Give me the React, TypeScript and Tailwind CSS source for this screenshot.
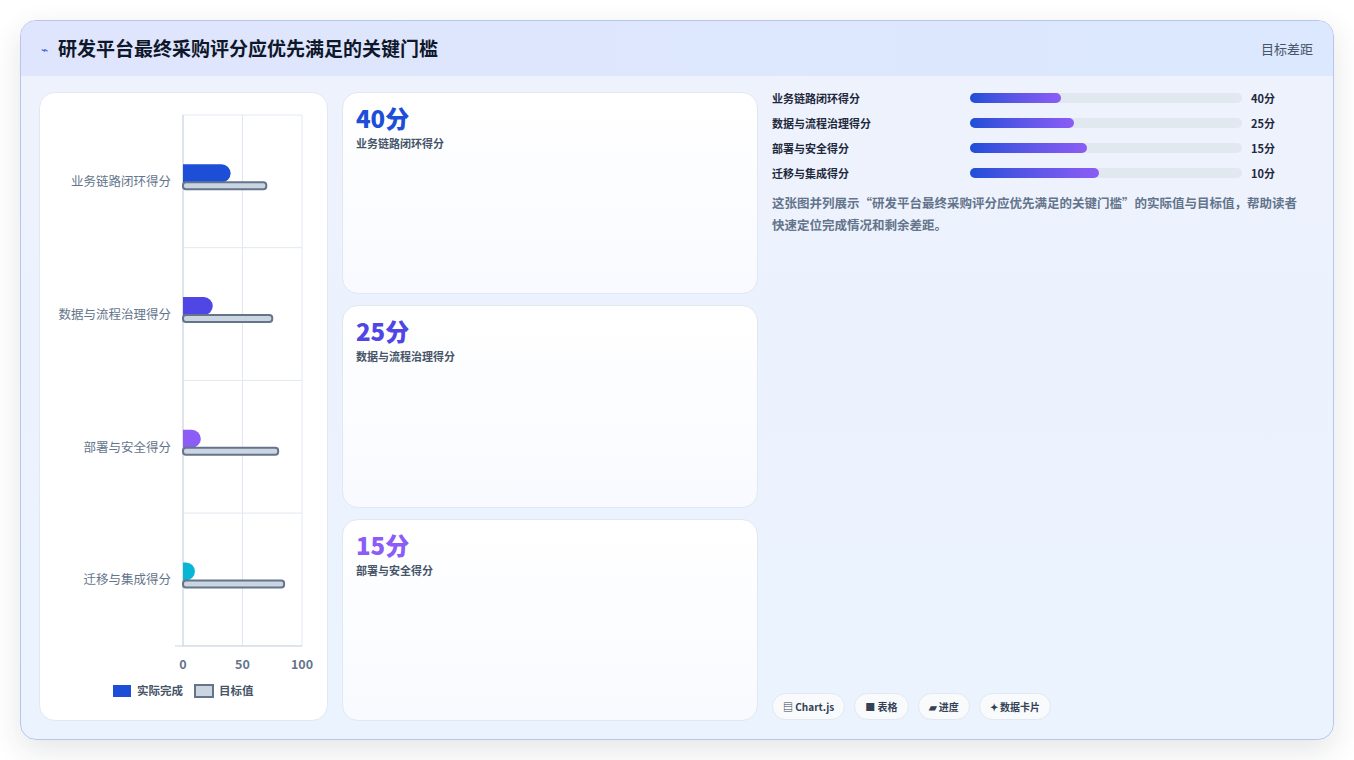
import React from "react";

const font = { fontFamily: '"Noto Sans CJK SC", "Noto Sans", sans-serif' };

const rows = [
  { label: "业务链路闭环得分", v: 40, t: 70, c: "#1d4ed8", pw: 33.5 },
  { label: "数据与流程治理得分", v: 25, t: 75, c: "#4f46e5", pw: 38.3 },
  { label: "部署与安全得分", v: 15, t: 80, c: "#8b5cf6", pw: 43 },
  { label: "迁移与集成得分", v: 10, t: 85, c: "#06b6d4", pw: 47.6 },
];

function Chart() {
  const x0 = 143, sc = 1.19, top = 22, rowH = 132.7;
  return (
    <svg width="288" height="627" className="block">
      {[0, 50, 100].map((v) => (
        <line key={v} x1={x0 + v * sc} x2={x0 + v * sc} y1={top} y2={553} stroke="#e2e8f0" />
      ))}
      {[0, 1, 2, 3, 4].map((i) => (
        <line key={i} x1={x0} x2={x0 + 119} y1={top + i * rowH} y2={top + i * rowH} stroke="#e2e8f0" />
      ))}
      <line x1={x0} x2={x0} y1={top} y2={553} stroke="#cbd5e1" />
      <line x1={x0 - 8} x2={x0 + 119} y1={553} y2={553} stroke="#cbd5e1" />
      {rows.map((r, i) => {
        const cy = top + i * rowH + rowH / 2;
        return (
          <g key={i}>
            <text x={x0 - 12} y={cy + 5} textAnchor="end" fontSize="12.5" fill="#64748b" style={font}>{r.label}</text>
            <path d={`M${x0} ${cy - 17} h${r.v * sc - 9} a9 9 0 0 1 9 9 v0 a9 9 0 0 1 -9 9 h${-(r.v * sc - 9)} z`} fill={r.c} />
            <rect x={x0} y={cy + 1} width={r.t * sc} height={7} rx={3} fill="#cbd5e1" stroke="#64748b" strokeWidth="2" />
          </g>
        );
      })}
      {[0, 50, 100].map((v) => (
        <text key={v} x={x0 + v * sc} y={576} textAnchor="middle" fontSize="12.5" fontWeight="bold" fill="#64748b" style={font}>{v}</text>
      ))}
      <rect x={73} y={592} width={18} height={12} fill="#1d4ed8" />
      <text x={97} y={602} fontSize="11.5" fontWeight="bold" fill="#475569" style={font}>实际完成</text>
      <rect x={155} y={592} width={18} height={12} fill="#cbd5e1" stroke="#64748b" strokeWidth="2" />
      <text x={179} y={602} fontSize="11.5" fontWeight="bold" fill="#475569" style={font}>目标值</text>
    </svg>
  );
}

export default function App() {
  return (
    <div className="w-[1354px] h-[760px] bg-white p-5" style={font}>
      <div className="h-[720px] rounded-2xl border border-[#b9c6ec] overflow-hidden flex flex-col shadow-[0_10px_30px_rgba(30,41,59,0.12)] bg-gradient-to-b from-[#eef2fd] to-[#eaf3fe]">
        <div className="h-[55px] shrink-0 bg-gradient-to-r from-[#dfe5fc] to-[#dbe8fd] flex items-center justify-between pl-5 pr-5">
          <div className="flex items-center gap-[10px]">
            <span className="text-[#3b5bdb] text-xs">⌁</span>
            <span className="text-[19px] font-bold text-[#0f172a]">研发平台最终采购评分应优先满足的关键门槛</span>
          </div>
          <span className="text-[13px] text-[#475569]">目标差距</span>
        </div>
        <div className="flex-1 flex gap-[14px] pl-[18px] pr-5 pt-[16px] pb-[18px]">
          <div className="w-[289px] bg-white rounded-2xl border border-[#e2e8f0]">
            <Chart />
          </div>
          <div className="w-[416px] flex flex-col gap-[11px]">
            {rows.slice(0, 3).map((r) => (
              <div key={r.label} className="flex-1 rounded-2xl border border-[#e2e8f0] bg-gradient-to-b from-white to-[#f8faff] px-[13px] pt-[9px]">
                <div className="text-[24px] font-extrabold leading-[32px]" style={{ color: r.c }}>{r.v}分</div>
                <div className="text-[11px] font-bold text-[#475569] mt-[1px]">{r.label}</div>
              </div>
            ))}
          </div>
          <div className="flex-1 flex flex-col">
            <div className="flex flex-col gap-[7px] -mt-[3px]">
              {rows.map((r) => (
                <div key={r.label} className="flex items-center h-[18px]">
                  <span className="w-[198px] text-[11px] font-bold text-[#1e293b]">{r.label}</span>
                  <div className="w-[272px] h-[10px] rounded-full bg-[#e2e8f0]">
                    <div className="h-full rounded-full bg-gradient-to-r from-[#1d4ed8] to-[#8b5cf6]" style={{ width: `${r.pw}%` }} />
                  </div>
                  <span className="ml-[9px] text-[11px] font-bold text-[#1e293b]">{r.v}分</span>
                </div>
              ))}
            </div>
            <p className="mt-[10px] w-[536px] text-[12.5px] font-bold leading-[22px] text-[#64748b]">
              这张图并列展示“研发平台最终采购评分应优先满足的关键门槛”的实际值与目标值，帮助读者快速定位完成情况和剩余差距。
            </p>
            <div className="mt-auto flex gap-[9px] mb-[1px]">
              {["▤ Chart.js", "■ 表格", "▰ 进度", "✦ 数据卡片"].map((t) => (
                <span key={t} className="h-[27px] px-[10px] flex items-center rounded-full border border-[#e2e8f0] bg-[#f8fafc] text-[10px] font-bold text-[#334155]">{t}</span>
              ))}
            </div>
          </div>
        </div>
      </div>
    </div>
  );
}
